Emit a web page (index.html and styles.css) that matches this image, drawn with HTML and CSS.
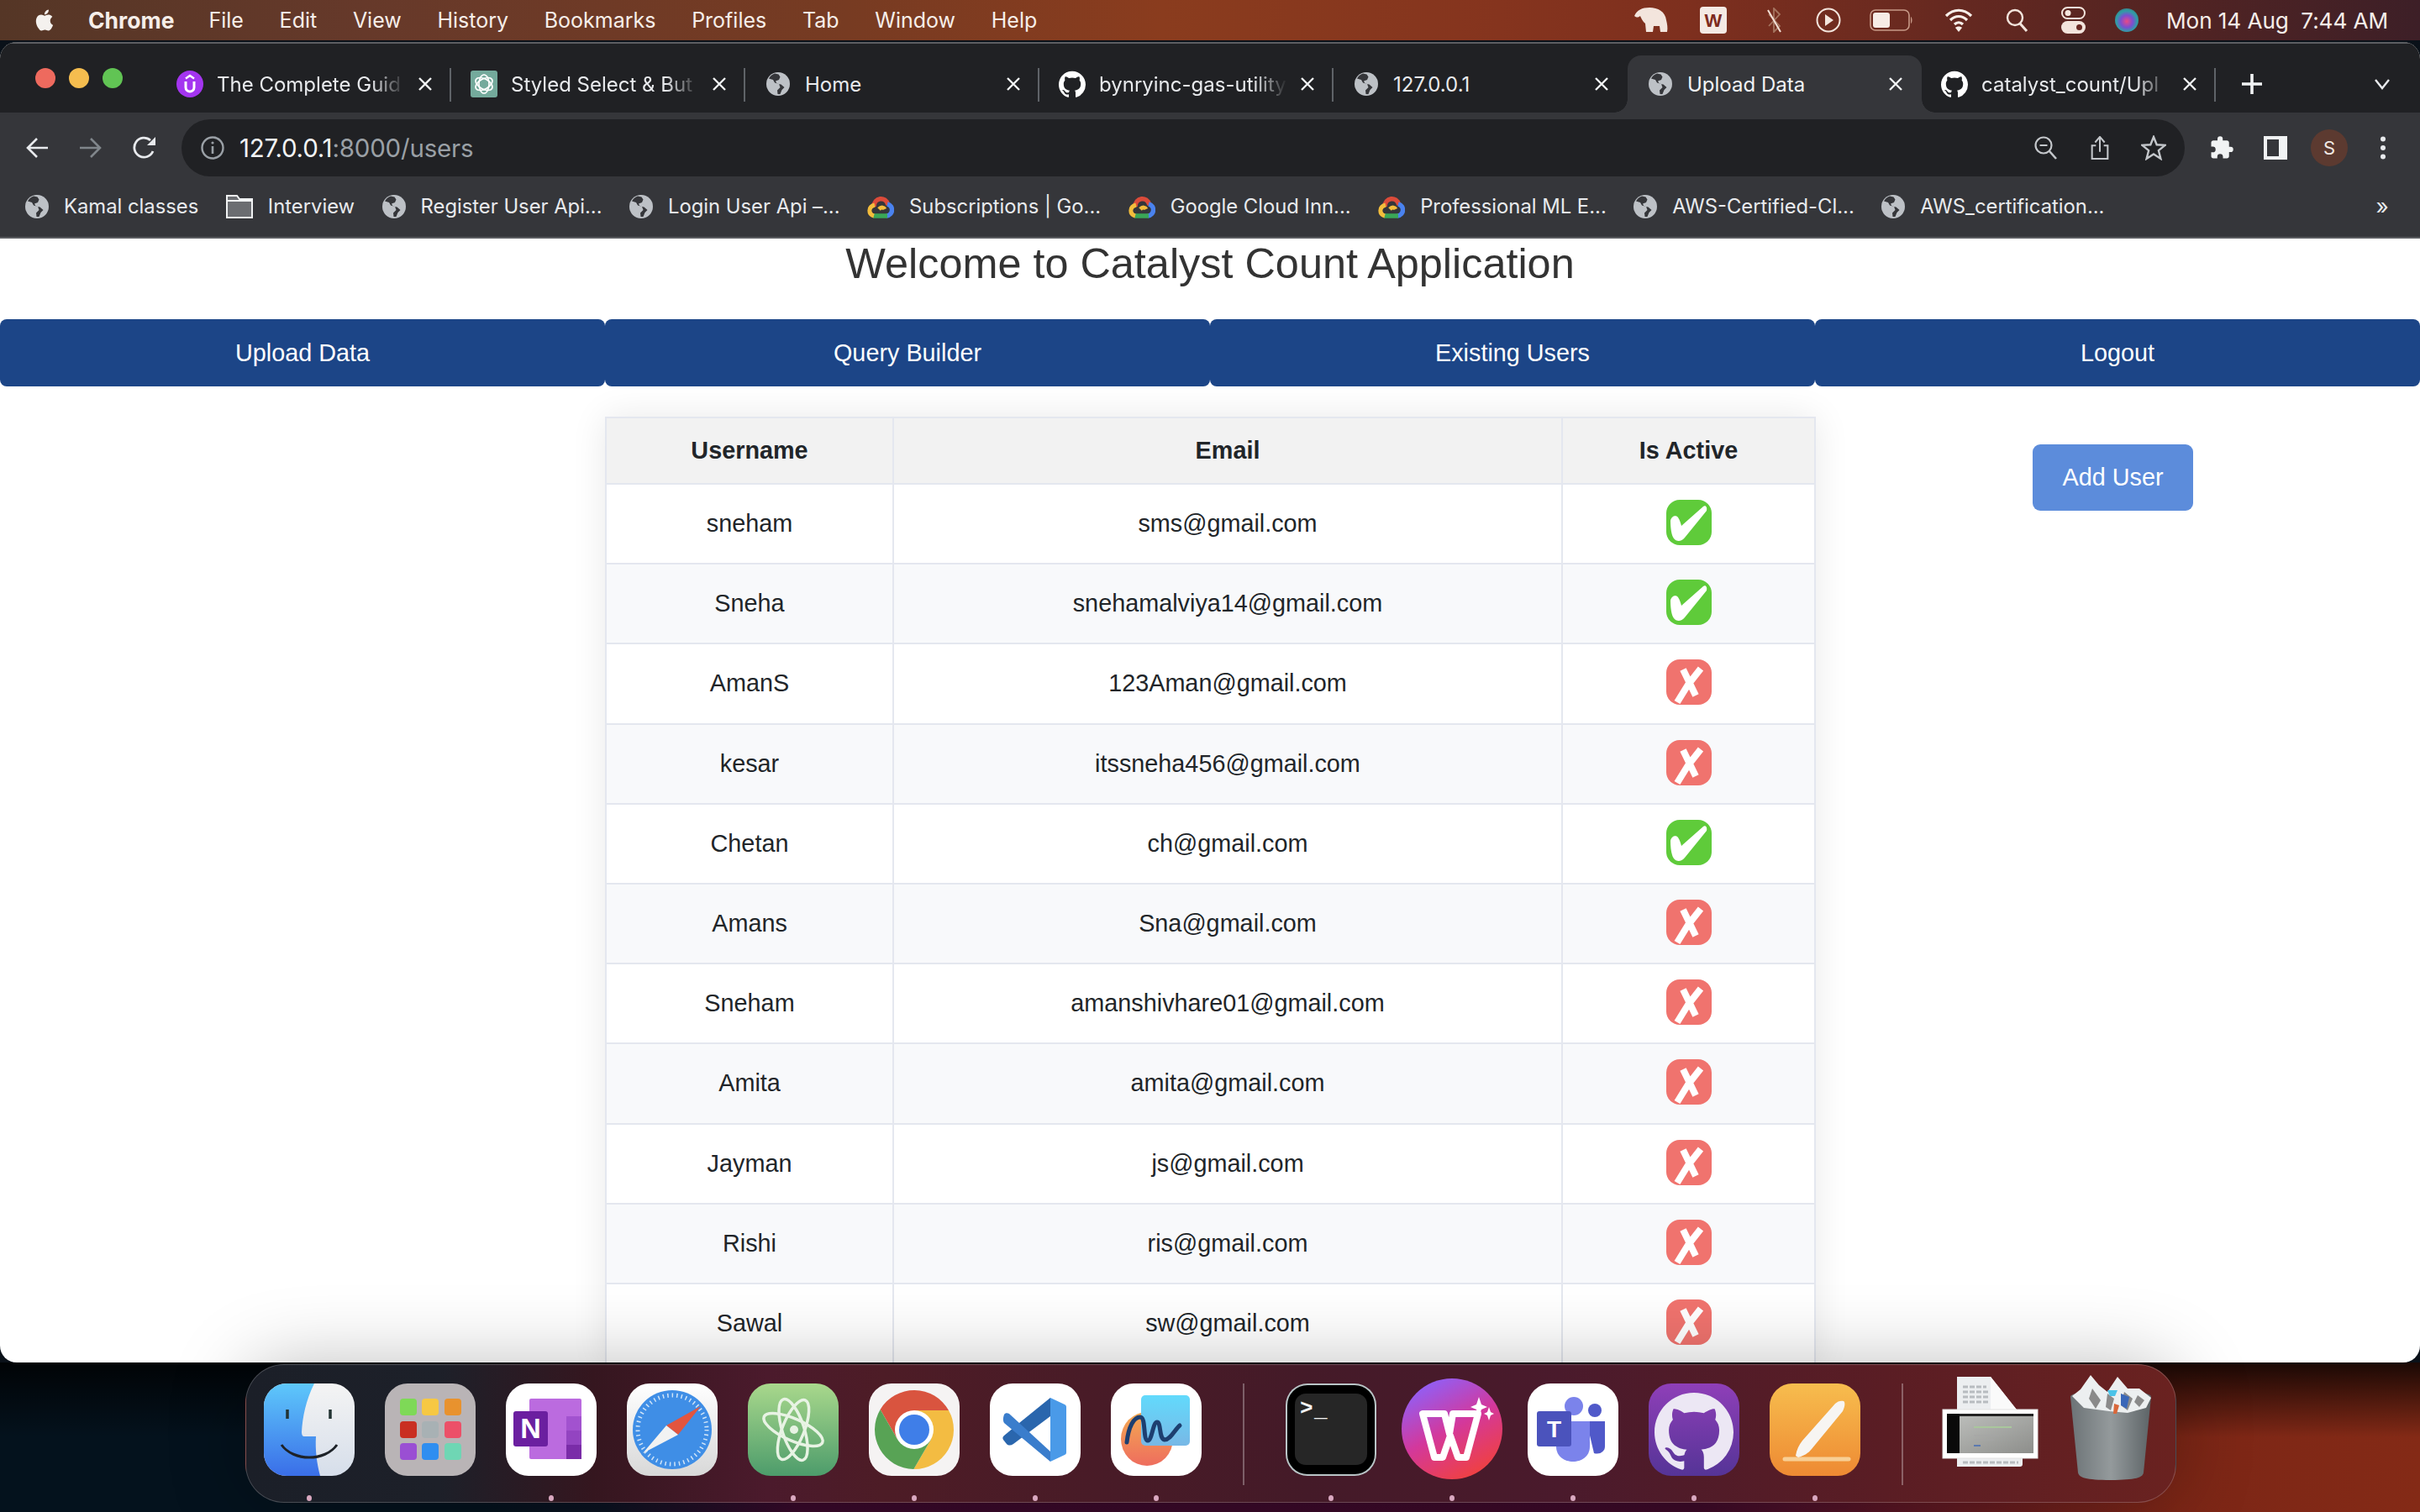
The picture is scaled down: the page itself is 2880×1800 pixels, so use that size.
FILE: index.html
```html
<!DOCTYPE html>
<html lang="en">
<head>
<meta charset="utf-8">
<title>Upload Data</title>
<link rel="stylesheet" href="styles.css">
</head>
<body>
<svg class="defs" aria-hidden="true">
  <symbol id="globe" viewBox="0 0 28 28">
    <circle cx="14" cy="14" r="14" fill="#bdc1c6"/>
    <path d="M10 1.500C7 2.500 4.500 4.500 3 7.500l5 1.500 2 3.500 5 1.500 1.500 4-3.500 3.500.5 4.500c1 .2 2 .2 3 0l2-5 3-3-4-3.500-5-1-1.500-3 4-1.500 1.500-3.500-2-3z" fill="#35363a"/>
  </symbol>
  <symbol id="github" viewBox="0 0 24 24">
    <path d="M12 .5C5.370.5 0 5.870 0 12.500c0 5.300 3.440 9.800 8.200 11.390.6.110.820-.260.820-.580v-2.030c-3.340.730-4.040-1.610-4.040-1.610-.550-1.390-1.330-1.760-1.330-1.760-1.090-.740.080-.730.080-.730 1.200.090 1.840 1.240 1.840 1.240 1.070 1.830 2.810 1.300 3.500 1 .110-.780.420-1.310.760-1.610-2.670-.3-5.470-1.330-5.470-5.930 0-1.310.470-2.380 1.240-3.220-.120-.3-.540-1.520.120-3.180 0 0 1-.320 3.300 1.230a11.500 11.500 0 0 1 6 0c2.300-1.550 3.300-1.230 3.300-1.230.660 1.660.240 2.880.120 3.180.770.840 1.240 1.910 1.240 3.220 0 4.610-2.810 5.630-5.480 5.920.430.370.810 1.100.810 2.220v3.290c0 .320.220.7.830.580A12 12 0 0 0 24 12.500C24 5.870 18.630.5 12 .5Z" fill="currentColor"/>
  </symbol>
  <symbol id="close" viewBox="0 0 18 16">
    <path d="M2 1l14 14M16 1L2 15" fill="none" stroke="#f1f3f4" stroke-width="2.400"/>
  </symbol>
  <symbol id="gcloud" viewBox="0 0 32 28">
    <path d="M8 14C8 3 22 1 25 12" fill="none" stroke="#db4b3a" stroke-width="5.500"/>
    <path d="M24 11c8 2 7 13-1 14" fill="none" stroke="#4a82ee" stroke-width="5.500"/>
    <path d="M24 25H7" fill="none" stroke="#3aa757" stroke-width="5.500"/>
    <path d="M8 25c-7-2-7-11 1-13M14 17c3-3 6-2 7 0" fill="none" stroke="#f4bd3c" stroke-width="5"/>
  </symbol>
  <symbol id="check" viewBox="0 0 54 54">
    <rect width="54" height="54" rx="16" fill="#5fcb3a"/>
    <path d="M5 25C6 19 12 18 14 21c2 3 3 6 4 10L44 8c3-2 5 1 4 5L22 45c-4 5-10 5-13 1-3-4-4-13-4-21z" fill="#fff"/>
  </symbol>
  <symbol id="cross" viewBox="0 0 54 54">
    <rect width="54" height="54" rx="16" fill="#f0736e"/>
    <path d="M20 12l15 31M41 11L26 30 13 51" fill="none" stroke="#fff" stroke-width="8"/>
  </symbol>
</svg>

<header class="menubar">
  <svg class="apple" viewBox="0 0 24 24"><path d="M18.710 19.500c-.830 1.240-1.710 2.450-3.050 2.470-1.340.030-1.770-.790-3.290-.790-1.530 0-2 .770-3.270.820-1.310.050-2.300-1.320-3.140-2.530C4.250 17 2.940 12.450 4.700 9.390c.870-1.520 2.430-2.480 4.120-2.510 1.280-.020 2.500.870 3.290.870.780 0 2.260-1.070 3.810-.910.650.030 2.470.260 3.640 1.980-.090.060-2.170 1.280-2.150 3.810.030 3.020 2.650 4.030 2.680 4.040-.030.070-.420 1.440-1.380 2.830M13 3.500c.730-.830 1.940-1.460 2.940-1.500.130 1.170-.340 2.350-1.040 3.190-.69.850-1.830 1.510-2.950 1.420-.150-1.150.410-2.350 1.050-3.110z" fill="#f4f1ee"/></svg>
  <nav class="menu-items">
    <b class="app-name">Chrome</b>
    <span>File</span><span>Edit</span><span>View</span><span>History</span><span>Bookmarks</span><span>Profiles</span><span>Tab</span><span>Window</span><span>Help</span>
  </nav>
  <div class="status-items">
    <svg class="st st-elephant" viewBox="0 0 41 30"><path d="M0 10C3 3 9 0 18 0c10 0 19 5 20 15 1 4 2 9 1 14h-8l-1-7h-7l-1 7h-8l-1-10c-3-2-5-7-6-9-3 2-4 2-7 0z" fill="#f3e5dd"/></svg>
    <svg class="st st-wps" viewBox="0 0 32 32"><rect width="32" height="32" rx="4" fill="#f4e9e4"/><text x="16" y="24" class="wps-letter">W</text></svg>
    <svg class="st st-bt" viewBox="0 0 25 30"><path d="M6 8l13 14-7 7V1l7 7L6 22" fill="none" stroke="#a5745f" stroke-width="1.800"/><path d="M5 3l15 26" stroke="#f3e0d6" stroke-width="2"/></svg>
    <svg class="st st-play" viewBox="0 0 30 30"><circle cx="15" cy="15" r="13.500" fill="none" stroke="#f3e5dd" stroke-width="2"/><path d="M11 8l10 7-10 7z" fill="#f3e5dd"/></svg>
    <svg class="st st-batt" viewBox="0 0 52 26"><rect x="1" y="1" width="46" height="24" rx="6" fill="none" stroke="#c89a88" stroke-width="1.600"/><rect x="4" y="4" width="20" height="18" rx="3" fill="#f6ece6"/><path d="M49 9c2 1 2 7 0 8z" fill="#c89a88"/></svg>
    <svg class="st st-wifi" viewBox="0 0 34 28"><path d="M2 9c9-9 21-9 30 0M7 14c6-6 14-6 20 0M12 19c3-3 7-3 10 0" fill="none" stroke="#f8efe9" stroke-width="3.200"/><path d="M17 28l-4-5c2-2 6-2 8 0z" fill="#f8efe9"/></svg>
    <svg class="st st-search" viewBox="0 0 27 28"><circle cx="11" cy="11" r="9" fill="none" stroke="#f3e5dd" stroke-width="2.400"/><path d="M17 18l8 9" stroke="#f3e5dd" stroke-width="3"/></svg>
    <svg class="st st-cc" viewBox="0 0 29 32"><rect x="1" y="1" width="27" height="13" rx="6.500" fill="none" stroke="#f3e5dd" stroke-width="2"/><circle cx="8" cy="7.500" r="3.500" fill="#f3e5dd"/><rect y="17" width="29" height="15" rx="7.500" fill="#f3e5dd"/><circle cx="21.500" cy="24.500" r="3.500" fill="#6a2a24"/></svg>
    <span class="siri"></span>
    <span class="clock">Mon 14 Aug&nbsp;&nbsp;7:44 AM</span>
  </div>
</header>

<main class="window">
  <div class="tabstrip">
    <div class="lights"><i class="light red"></i><i class="light yellow"></i><i class="light green"></i></div>
    <div class="tab">
      <svg class="fav" viewBox="0 0 32 32"><circle cx="16" cy="16" r="16" fill="#a435f0"/><path d="M11 9.500l5-3.500 5 3.500" fill="none" stroke="#fff" stroke-width="2.500"/><path d="M11 13v7c0 6.500 10 6.500 10 0v-7" fill="none" stroke="#fff" stroke-width="3"/></svg>
      <span class="title fade">The Complete Guid</span>
      <svg class="x"><use href="#close"/></svg>
    </div>
    <div class="tab">
      <svg class="fav" viewBox="0 0 32 32"><rect width="32" height="32" rx="3" fill="#74aa9c"/><g fill="none" stroke="#fff" stroke-width="1.600"><ellipse cx="16" cy="16" rx="6" ry="11"/><ellipse cx="16" cy="16" rx="6" ry="11" transform="rotate(60 16 16)"/><ellipse cx="16" cy="16" rx="6" ry="11" transform="rotate(120 16 16)"/></g></svg>
      <span class="title fade">Styled Select &amp; But</span>
      <svg class="x"><use href="#close"/></svg>
    </div>
    <div class="tab">
      <svg class="fav fav-globe"><use href="#globe"/></svg>
      <span class="title">Home</span>
      <svg class="x"><use href="#close"/></svg>
    </div>
    <div class="tab">
      <svg class="fav gh"><use href="#github"/></svg>
      <span class="title fade">bynryinc-gas-utility</span>
      <svg class="x"><use href="#close"/></svg>
    </div>
    <div class="tab no-sep">
      <svg class="fav fav-globe"><use href="#globe"/></svg>
      <span class="title">127.0.0.1</span>
      <svg class="x"><use href="#close"/></svg>
    </div>
    <div class="tab active">
      <svg class="fav fav-globe"><use href="#globe"/></svg>
      <span class="title">Upload Data</span>
      <svg class="x"><use href="#close"/></svg>
    </div>
    <div class="tab">
      <svg class="fav gh"><use href="#github"/></svg>
      <span class="title fade">catalyst_count/Upl</span>
      <svg class="x"><use href="#close"/></svg>
    </div>
    <div class="newtab"><svg viewBox="0 0 24 24"><path d="M12 0v24M0 12h24" stroke="#f1f3f4" stroke-width="3.600"/></svg></div>
    <div class="tabmenu"><svg viewBox="0 0 20 14"><path d="M2 2l8 10 8-10" fill="none" stroke="#e8eaed" stroke-width="2.400"/></svg></div>
  </div>

  <div class="toolbar">
    <button class="tb"><svg class="i26" viewBox="0 0 26 26"><path d="M26 13H3M13 2L2 13l11 11" fill="none" stroke="#e8eaed" stroke-width="2.600"/></svg></button>
    <button class="tb"><svg class="i26" viewBox="0 0 26 26"><path d="M0 13h23M13 2l11 11-11 11" fill="none" stroke="#80868b" stroke-width="2.600"/></svg></button>
    <button class="tb"><svg class="i28" viewBox="0 0 28 28"><path d="M24 18A11.500 11.500 0 1 1 21 5" fill="none" stroke="#e8eaed" stroke-width="2.800"/><path d="M27 1v10H17z" fill="#e8eaed"/></svg></button>
    <div class="omnibox">
      <svg class="info" viewBox="0 0 28 28"><circle cx="14" cy="14" r="12.500" fill="none" stroke="#9aa0a6" stroke-width="2.400"/><path d="M14 12v9" stroke="#9aa0a6" stroke-width="2.600"/><circle cx="14" cy="8" r="1.600" fill="#9aa0a6"/></svg>
      <span class="url">127.0.0.1<span class="url-dim">:8000/users</span></span>
      <span class="ob"><svg class="i28" viewBox="0 0 28 28"><circle cx="11" cy="11" r="9.500" fill="none" stroke="#c4c7cb" stroke-width="2.200"/><path d="M6.500 11h9" stroke="#c4c7cb" stroke-width="2.200"/><path d="M18 18l8 9" stroke="#c4c7cb" stroke-width="2.600"/></svg></span>
      <span class="ob"><svg class="i28" viewBox="0 0 24 30"><path d="M12 1v19M6 8l6-7 6 7" fill="none" stroke="#c4c7cb" stroke-width="2.200"/><path d="M7 12H2v17h20V12h-5" fill="none" stroke="#c4c7cb" stroke-width="2.200"/></svg></span>
      <span class="ob"><svg class="i30" viewBox="0 0 30 30"><path d="M15 2l3.700 9.300 9.800.6-7.600 6.300 2.500 9.700-8.400-5.400-8.400 5.400 2.500-9.700L1.500 11.900l9.800-.6z" fill="none" stroke="#c4c7cb" stroke-width="2.400"/></svg></span>
    </div>
    <button class="tb"><svg class="i30" viewBox="0 0 24 24"><path d="M20.500 11H19V7c0-1.100-.9-2-2-2h-4V3.500a2.500 2.500 0 0 0-5 0V5H4c-1.100 0-2 .9-2 2v3.800h1.500a2.700 2.700 0 0 1 0 5.400H2V20c0 1.100.9 2 2 2h3.800v-1.500a2.700 2.700 0 0 1 5.400 0V22H17c1.100 0 2-.9 2-2v-4h1.500a2.500 2.500 0 0 0 0-5z" fill="#f1f3f4"/></svg></button>
    <button class="tb"><svg class="i28" viewBox="0 0 28 28"><rect width="28" height="28" fill="#f1f3f4"/><rect x="4" y="4" width="14" height="20" fill="#35363a"/></svg></button>
    <button class="tb"><span class="avatar">S</span></button>
    <button class="tb"><svg class="dots" viewBox="0 0 8 28"><circle cx="4" cy="3.500" r="3" fill="#e8eaed"/><circle cx="4" cy="14" r="3" fill="#e8eaed"/><circle cx="4" cy="24.500" r="3" fill="#e8eaed"/></svg></button>
  </div>

  <div class="bookmarks">
    <span class="bm"><svg class="bm-i"><use href="#globe"/></svg>Kamal classes</span>
    <span class="bm bm-folder"><svg class="bm-f" viewBox="0 0 32 28"><path d="M1 27V1h12l3 4h15v22z" fill="#6b6d71" stroke="#f1f3f4" stroke-width="2"/><path d="M1 7h30" stroke="#f1f3f4" stroke-width="2"/></svg>Interview</span>
    <span class="bm"><svg class="bm-i"><use href="#globe"/></svg>Register User Api...</span>
    <span class="bm"><svg class="bm-i"><use href="#globe"/></svg>Login User Api –...</span>
    <span class="bm"><svg class="bm-g"><use href="#gcloud"/></svg>Subscriptions | Go...</span>
    <span class="bm"><svg class="bm-g"><use href="#gcloud"/></svg>Google Cloud Inn...</span>
    <span class="bm"><svg class="bm-g"><use href="#gcloud"/></svg>Professional ML E...</span>
    <span class="bm"><svg class="bm-i"><use href="#globe"/></svg>AWS-Certified-Cl...</span>
    <span class="bm"><svg class="bm-i"><use href="#globe"/></svg>AWS_certification...</span>
    <span class="bm-more">»</span>
  </div>

  <div class="page">
    <h1 class="heading">Welcome to Catalyst Count Application</h1>
    <div class="nav">
      <a class="nav-btn">Upload Data</a>
      <a class="nav-btn">Query Builder</a>
      <a class="nav-btn">Existing Users</a>
      <a class="nav-btn">Logout</a>
    </div>
    <section class="content">
      <table class="users">
        <thead>
          <tr><th class="c-user">Username</th><th class="c-mail">Email</th><th class="c-act">Is Active</th></tr>
        </thead>
        <tbody>
          <tr><td>sneham</td><td>sms@gmail.com</td><td><svg class="status"><use href="#check"/></svg></td></tr>
          <tr><td>Sneha</td><td>snehamalviya14@gmail.com</td><td><svg class="status"><use href="#check"/></svg></td></tr>
          <tr><td>AmanS</td><td>123Aman@gmail.com</td><td><svg class="status"><use href="#cross"/></svg></td></tr>
          <tr><td>kesar</td><td>itssneha456@gmail.com</td><td><svg class="status"><use href="#cross"/></svg></td></tr>
          <tr><td>Chetan</td><td>ch@gmail.com</td><td><svg class="status"><use href="#check"/></svg></td></tr>
          <tr><td>Amans</td><td>Sna@gmail.com</td><td><svg class="status"><use href="#cross"/></svg></td></tr>
          <tr><td>Sneham</td><td>amanshivhare01@gmail.com</td><td><svg class="status"><use href="#cross"/></svg></td></tr>
          <tr><td>Amita</td><td>amita@gmail.com</td><td><svg class="status"><use href="#cross"/></svg></td></tr>
          <tr><td>Jayman</td><td>js@gmail.com</td><td><svg class="status"><use href="#cross"/></svg></td></tr>
          <tr><td>Rishi</td><td>ris@gmail.com</td><td><svg class="status"><use href="#cross"/></svg></td></tr>
          <tr><td>Sawal</td><td>sw@gmail.com</td><td><svg class="status"><use href="#cross"/></svg></td></tr>
        </tbody>
      </table>
      <div class="side"><a class="add-user">Add User</a></div>
    </section>
  </div>
</main>

<footer class="desktop">
  <div class="dock">
    <div class="slot on"><svg class="app" viewBox="0 0 108 110">
      <defs><linearGradient id="fb" x1="0" y1="0" x2="0" y2="1"><stop offset="0" stop-color="#5ec8fb"/><stop offset="1" stop-color="#3a6ee8"/></linearGradient><linearGradient id="fw" x1="0" y1="0" x2="0" y2="1"><stop offset="0" stop-color="#f4f4f4"/><stop offset="1" stop-color="#d6deea"/></linearGradient><clipPath id="ic"><rect width="108" height="110" rx="27"/></clipPath></defs>
      <g clip-path="url(#ic)"><rect width="108" height="110" fill="url(#fw)"/><path d="M0 0h60C50 20 46 40 45 58c0 3 1 5 3 5h14c-1 16 1 32 5 47H0z" fill="url(#fb)"/></g>
      <path d="M28 31v11M79 31v11" stroke="#233" stroke-width="3.500"/><path d="M21 73c14 20 52 20 66 0" fill="none" stroke="#1d2228" stroke-width="3"/>
    </svg></div>
    <div class="slot"><svg class="app" viewBox="0 0 108 110">
      <rect width="108" height="110" rx="27" fill="#b9b4b6"/>
      <rect x="18" y="18" width="20" height="20" rx="4" fill="#7ed957"/><rect x="44" y="18" width="20" height="20" rx="4" fill="#f6c843"/><rect x="71" y="18" width="20" height="20" rx="4" fill="#e8922e"/>
      <rect x="18" y="45" width="20" height="20" rx="4" fill="#c92f22"/><rect x="44" y="45" width="20" height="20" rx="4" fill="#a8b1b4"/><rect x="71" y="45" width="20" height="20" rx="4" fill="#ec5068"/>
      <rect x="18" y="71" width="20" height="20" rx="4" fill="#9a4fd3"/><rect x="44" y="71" width="20" height="20" rx="4" fill="#2f8ef0"/><rect x="71" y="71" width="20" height="20" rx="4" fill="#6fd6b4"/>
    </svg></div>
    <div class="slot on"><svg class="app" viewBox="0 0 108 110">
      <rect width="108" height="110" rx="27" fill="#fff"/>
      <rect x="28" y="18" width="62" height="72" rx="2" fill="#bb6bdf"/>
      <rect x="72" y="39" width="18" height="17" fill="#a252cf"/><rect x="72" y="56" width="18" height="17" fill="#9344c1"/><rect x="72" y="73" width="18" height="17" fill="#7a2ca8"/>
      <rect x="9" y="33" width="41" height="42" rx="3" fill="#6b1fa0"/><text x="29.500" y="65" class="ic-n">N</text>
    </svg></div>
    <div class="slot"><svg class="app" viewBox="0 0 108 110">
      <defs><linearGradient id="sb" x1="0" y1="0" x2="0" y2="1"><stop offset="0" stop-color="#fff"/><stop offset="1" stop-color="#d8d8d8"/></linearGradient></defs>
      <rect width="108" height="110" rx="27" fill="url(#sb)"/><circle cx="54" cy="55" r="47" fill="#3f8ee6"/>
      <circle cx="54" cy="55" r="41" fill="none" stroke="#cfe4f8" stroke-width="5" stroke-dasharray="1.500 4"/>
      <path d="M88 27L47 50l14 11z" fill="#e2553f"/><path d="M19 83l28-33 14 11z" fill="#f2f2f2"/>
    </svg></div>
    <div class="slot on"><svg class="app" viewBox="0 0 108 110">
      <defs><linearGradient id="ag" x1="0" y1="0" x2="0" y2="1"><stop offset="0" stop-color="#a9d88c"/><stop offset="1" stop-color="#4d9c6b"/></linearGradient></defs>
      <rect width="108" height="110" rx="27" fill="url(#ag)"/>
      <g fill="none" stroke="#e8f3e4" stroke-width="3.500"><ellipse cx="54" cy="55" rx="13" ry="38" transform="rotate(-18 54 55)"/><ellipse cx="54" cy="55" rx="13" ry="38" transform="rotate(22 54 55)"/><ellipse cx="54" cy="55" rx="38" ry="13" transform="rotate(24 54 55)"/></g><circle cx="55" cy="55" r="5" fill="#e8f3e4"/>
    </svg></div>
    <div class="slot on"><svg class="app" viewBox="0 0 108 110">
      <rect width="108" height="110" rx="27" fill="#f5f3f3"/>
      <path d="M13.600 31A47 47 0 0 1 95 32H54L54 55 34 66.500z" fill="#d9543f"/>
      <path d="M95 32A47 47 0 0 1 53.400 102L74 66.500 54 55V32z" fill="#f3bc42"/>
      <path d="M53.400 102A47 47 0 0 1 13.600 31L34 66.500 54 55l20 11.500z" fill="#58a355"/>
      <circle cx="54" cy="55" r="23" fill="#fff"/><circle cx="54" cy="55" r="18" fill="#3f7ee8"/>
    </svg></div>
    <div class="slot on"><svg class="app" viewBox="0 0 108 110">
      <rect width="108" height="110" rx="27" fill="#fff"/>
      <path d="M72 17v22L28 72c-3 2-6 2-8 0l-4-5c-1-2-1-3 1-5l18-15z" fill="#2a66ad"/>
      <path d="M17 37c1-2 4-2 6-1l49 45v12l-55-46c-1-2-2-4 0-10z" fill="#3a7dcc"/>
      <path d="M72 17l17 8c2 1 2 2 2 4v52c0 2 0 3-2 4l-17 8z" fill="#4a9ae8"/>
    </svg></div>
    <div class="slot on"><svg class="app" viewBox="0 0 108 110">
      <defs><linearGradient id="fo" x1="0" y1="0" x2="0" y2="1"><stop offset="0" stop-color="#f4aa52"/><stop offset="1" stop-color="#ee6d5e"/></linearGradient><linearGradient id="fbl" x1="0" y1="0" x2="0" y2="1"><stop offset="0" stop-color="#62dafc"/><stop offset="1" stop-color="#78b8e6"/></linearGradient></defs>
      <rect width="108" height="110" rx="27" fill="#fff"/>
      <ellipse cx="43" cy="66" rx="31" ry="32" fill="url(#fo)"/><rect x="36" y="14" width="58" height="60" rx="5" fill="url(#fbl)"/>
      <path d="M19 70c2-18 8-30 16-30 7 0 3 28 9 28 5 0 6-22 11-22 5 0 2 20 9 21 7 0 12-12 18-17" fill="none" stroke="#1d3f70" stroke-width="5" stroke-linecap="round"/>
    </svg></div>
    <span class="dock-sep"></span>
    <div class="slot on"><svg class="app" viewBox="0 0 108 110">
      <rect width="108" height="110" rx="26" fill="#b9c4c6"/><rect x="2" y="2" width="104" height="106" rx="24" fill="#000"/><rect x="11" y="12" width="86" height="85" rx="13" fill="#262626"/>
      <text x="17" y="37" class="ic-term">&gt;</text><text x="34" y="39" class="ic-term">_</text>
    </svg></div>
    <div class="slot on"><svg class="app app-wps" viewBox="0 0 120 120">
      <defs><linearGradient id="wg" x1=".2" y1="0" x2=".75" y2="1"><stop offset="0" stop-color="#8a63ff"/><stop offset=".5" stop-color="#d3389c"/><stop offset="1" stop-color="#f2413a"/></linearGradient></defs>
      <circle cx="60" cy="60" r="60" fill="url(#wg)"/>
      <path d="M25 42h26l6 24 4-24h30L77 94H67L58 68 49 94H39z" fill="none" stroke="#fff" stroke-width="8" stroke-linejoin="round"/>
      <path d="M92 22l3 9 7 3-7 3-3 9-3-9-7-3 7-3zM104 34l2 6 4 2-4 2-2 6-2-6-4-2 4-2z" fill="#fff"/>
    </svg></div>
    <div class="slot on"><svg class="app" viewBox="0 0 108 110">
      <rect width="108" height="110" rx="27" fill="#fff"/>
      <circle cx="55" cy="27" r="11" fill="#7b83eb"/><circle cx="80" cy="32" r="8" fill="#5059c9"/>
      <path d="M70 45h22v30c0 6-6 10-13 8z" fill="#5059c9"/><path d="M34 45h40v30c0 24-40 24-40 0z" fill="#7b83eb"/>
      <rect x="11" y="33" width="41" height="42" rx="3" fill="#4b53bc"/><text x="31.500" y="64" class="ic-t">T</text>
    </svg></div>
    <div class="slot on"><svg class="app" viewBox="0 0 108 110">
      <defs><linearGradient id="gh" x1="0" y1="0" x2="0" y2="1"><stop offset="0" stop-color="#8f3fb8"/><stop offset="1" stop-color="#553497"/></linearGradient></defs>
      <rect width="108" height="110" rx="27" fill="url(#gh)"/>
      <svg class="gh-big" x="7" y="9" width="94" height="94"><use href="#github"/></svg>
    </svg></div>
    <div class="slot on"><svg class="app" viewBox="0 0 108 110">
      <defs><linearGradient id="pg" x1="0" y1="0" x2="0" y2="1"><stop offset="0" stop-color="#f7bd4e"/><stop offset="1" stop-color="#ee8a33"/></linearGradient></defs>
      <rect width="108" height="110" rx="27" fill="url(#pg)"/>
      <path d="M18 90h76" stroke="#f8cf95" stroke-width="5" stroke-linecap="round"/>
      <path d="M88 21c2 1 2 6-1 12L50 78c-4 5-9 8-16 10l-3-2c1-7 4-13 8-18L78 24c3-3 7-4 10-3z" fill="#f7f5f2"/>
    </svg></div>
    <span class="dock-sep"></span>
    <div class="slot"><svg class="app" viewBox="0 0 108 110">
      <path d="M15-8h40l38 48v56a3 3 0 0 1-3 3H15z" fill="#eceef0"/><path d="M55-8l38 48H62c-4 0-7-3-7-7z" fill="#fafafa"/>
      <path d="M22 4h28M22 10h30M22 16h30M22 22h30M60 44h28M22 94h66" stroke="#b8bcc0" stroke-width="3" stroke-dasharray="6 2"/>
      <rect x="-2" y="31" width="113" height="58" fill="#fff" stroke="#e2e2e2"/>
      <defs><linearGradient id="sh" x1="0" y1="0" x2="1" y2="1"><stop offset="0" stop-color="#c0c2bf"/><stop offset="1" stop-color="#8d8e8b"/></linearGradient></defs>
      <rect x="3" y="36" width="103" height="47" fill="url(#sh)"/><rect x="3" y="36" width="15" height="47" fill="#0a0a0a"/><rect x="18" y="36" width="88" height="3" fill="#222"/>
      <path d="M35 52h45" stroke="#a9c79c" stroke-width="2"/><path d="M35 74h8" stroke="#5b79b0" stroke-width="2"/><path d="M35 62h30M35 67h24" stroke="#a5a5a5" stroke-width="1"/>
    </svg></div>
    <div class="slot"><svg class="app" viewBox="0 0 108 110">
      <defs><linearGradient id="tg" x1="0" y1="0" x2="1" y2="0"><stop offset="0" stop-color="#6c7376"/><stop offset=".5" stop-color="#949a9c"/><stop offset="1" stop-color="#5c6366"/></linearGradient></defs>
      <path d="M6 16c0-4 10-6 48-6s48 2 48 6l-9 90c-1 6-9 9-39 9s-38-3-39-9z" fill="url(#tg)"/>
      <path d="M8 15l10-8 12-17 10 12 10 8 12-18 12 14 14 0 14 11-6 12-22 6-22-2-30-4z" fill="#eceff0"/>
      <path d="M32 6l10 14-6 10-8-12zM50 12l8 6-4 14-6-4zM70 10l10 8-6 14-8-6zM86 14l8 6-6 8-6-6z" fill="#8a8a8a"/><path d="M50 8h12l-3 7h-6z" fill="#4bc3e8"/><path d="M66 12l10 4-3 14-7-4z" fill="#3a67b8"/><path d="M58 24l6 2-3 10h-4z" fill="#d9673a"/>
    </svg></div>
  </div>
</footer>
</body>
</html>
```
FILE: styles.css
```css
* { box-sizing: border-box; }
html, body { margin: 0; padding: 0; }
body {
  width: 2880px;
  height: 1800px;
  overflow: hidden;
  background: #0a1119;
  font-family: "Liberation Sans", Arial, sans-serif;
  color: #212529;
}
.defs { width: 0; height: 0; display: block; overflow: hidden; }

/* menu bar */
.menubar {
  height: 48px;
  margin-bottom: 2px;
  display: flex;
  align-items: center;
  padding-left: 38px;
  color: #f6eee9;
  font-family: Inter, "Noto Sans", sans-serif;
  font-size: 25px;
  background: linear-gradient(90deg, #553626 0, #66392a 15%, #773b22 35%, #8a3c1e 48%, #85341e 62%, #7d2f1e 70%, #5c2621 85%, #3d1f27 100%);
}
.apple { width: 30px; height: 34px; flex: none; }
.menu-items { display: flex; align-items: center; gap: 42.700px; margin-left: 37px; }
.app-name { font-weight: 700; font-size: 26.500px; margin-right: -1.700px; }
.status-items { margin-left: auto; display: flex; align-items: center; padding-right: 38px; }
.st { display: block; flex: none; }
.st-elephant { width: 41px; height: 30px; margin-right: 37px; }
.st-wps { width: 32px; height: 32px; margin-right: 44px; }
.wps-letter { font: 700 22px "Liberation Sans", sans-serif; fill: #7d2a20; text-anchor: middle; }
.st-bt { width: 25px; height: 30px; margin-right: 37px; }
.st-play { width: 30px; height: 30px; margin-right: 34px; }
.st-batt { width: 52px; height: 26px; margin-right: 37px; }
.st-wifi { width: 34px; height: 28px; margin-right: 39px; }
.st-search { width: 27px; height: 28px; margin-right: 39px; }
.st-cc { width: 29px; height: 32px; margin-right: 35px; }
.siri {
  width: 28px; height: 28px; border-radius: 50%; margin-right: 33px; flex: none;
  background: radial-gradient(circle at 50% 55%, #e84a86 0, #7a4ed0 35%, #2f9ea5 60%, #4a5560 100%);
}
.clock { white-space: nowrap; font-size: 26.200px; letter-spacing: -.1px; }

/* browser window */
.window {
  height: 1572px;
  border-radius: 20px;
  overflow: hidden;
  background: #fff;
  display: flex;
  flex-direction: column;
  position: relative;
}
.tabstrip {
  height: 84px;
  flex: none;
  display: flex;
  align-items: flex-end;
  background: #202124;
  border-top: 2px solid #5c5e62;
}
.lights { width: 187px; flex: none; display: flex; gap: 16px; padding-left: 42px; margin-bottom: 29px; }
.light { width: 24px; height: 24px; border-radius: 50%; display: block; }
.red { background: #ee6a5e; }
.yellow { background: #f5bd4f; }
.green { background: #61c454; }
.tab {
  width: 350px;
  height: 68px;
  flex: none;
  position: relative;
  display: flex;
  align-items: center;
  padding-left: 23px;
  color: #e8eaed;
  font-family: Inter, "Noto Sans", sans-serif;
  font-size: 24px;
}
.tab::after {
  content: "";
  position: absolute;
  right: 0;
  top: 15px;
  height: 40px;
  width: 2px;
  background: #5f6368;
}
.tab.no-sep::after { display: none; }
.tab.active { background: #35363a; border-radius: 16px 16px 0 0; color: #f1f3f4; }
.tab.active::before, .tab.active::after {
  content: "";
  position: absolute;
  top: auto;
  bottom: 0;
  width: 16px;
  height: 16px;
}
.tab.active::before { left: -16px; background: radial-gradient(circle at 0 0, transparent 15.500px, #35363a 16px); }
.tab.active::after { right: -16px; background: radial-gradient(circle at 100% 0, transparent 15.500px, #35363a 16px); }
.fav { width: 32px; height: 32px; flex: none; }
.fav-globe { width: 28px; height: 28px; margin: 0 2px; }
.gh { color: #fff; }
.title { width: 224px; margin-left: 16px; white-space: nowrap; overflow: hidden; flex: none; }
.fade { -webkit-mask-image: linear-gradient(90deg, #000 82%, transparent 100%); mask-image: linear-gradient(90deg, #000 82%, transparent 100%); }
.x { width: 18px; height: 16px; margin-left: 15px; flex: none; }
.newtab { width: 86px; height: 68px; flex: none; display: flex; align-items: center; justify-content: center; }
.newtab svg { width: 24px; height: 24px; }
.tabmenu { margin-left: auto; width: 64px; height: 68px; margin-right: 13px; display: flex; align-items: center; justify-content: center; }
.tabmenu svg { width: 20px; height: 14px; }

.toolbar {
  height: 84px;
  flex: none;
  display: flex;
  align-items: center;
  background: #35363a;
  padding: 0 12px;
}
.tb {
  width: 64px;
  height: 64px;
  flex: none;
  background: none;
  border: 0;
  padding: 0;
  display: flex;
  align-items: center;
  justify-content: center;
}
.i26 { width: 26px; height: 26px; }
.i28 { width: 28px; height: 28px; }
.i30 { width: 30px; height: 30px; }
.dots { width: 8px; height: 28px; }
.avatar {
  width: 44px; height: 44px; border-radius: 50%;
  background: #5c3a30;
  color: #f1e9e4;
  font: 22px Inter, sans-serif;
  display: flex; align-items: center; justify-content: center;
}
.omnibox {
  flex: 1;
  height: 68px;
  margin: 0 12px;
  border-radius: 34px;
  background: #202124;
  display: flex;
  align-items: center;
  padding: 0 5px 0 23px;
}
.info { width: 28px; height: 28px; flex: none; }
.url { flex: 1; margin-left: 18px; font: 29.500px Inter, "Noto Sans", sans-serif; color: #f1f3f4; letter-spacing: -.2px; }
.url-dim { color: #9aa0a6; }
.ob { width: 64px; display: flex; justify-content: center; flex: none; }

.bookmarks {
  height: 66px;
  flex: none;
  display: flex;
  align-items: center;
  gap: 32.500px;
  background: #35363a;
  border-bottom: 2px solid #5a5c60;
  padding: 0 13px 9px 30px;
  color: #e8eaed;
  font-family: Inter, "Noto Sans", sans-serif;
  font-size: 23.800px;
  white-space: nowrap;
}
.bm { display: flex; align-items: center; gap: 18px; flex: none; }
.bm-i { width: 28px; height: 28px; flex: none; }
.bm-f { width: 32px; height: 28px; flex: none; }
.bm-g { width: 32px; height: 28px; flex: none; }
.bm-more { margin-left: auto; width: 64px; text-align: center; font-size: 26px; }

/* page */
.page { flex: 1; min-height: 0; }
.heading {
  margin: 0 0 36px;
  height: 60px;
  font-size: 50.400px;
  line-height: 60px;
  font-weight: 400;
  text-align: center;
  color: #333;
}
.nav { display: flex; }
.nav-btn {
  flex: 1;
  height: 80px;
  border-radius: 8px;
  background: #1c4587;
  color: #fff;
  font-size: 28.800px;
  display: flex;
  align-items: center;
  justify-content: center;
}
.content { display: flex; margin-top: 36px; padding-left: 720px; align-items: flex-start; }
.users {
  width: 1439px;
  flex: none;
  table-layout: fixed;
  border-collapse: collapse;
  box-shadow: 0 0 40px rgba(0, 0, 0, .09);
  font-size: 28.800px;
  text-align: center;
  color: #212529;
  background: #fff;
}
.users th, .users td { border: 2px solid #e4e7ef; padding: 0; }
.users th { height: 79px; background: #f2f2f2; font-weight: 700; }
.users td { height: 95.200px; }
.users tbody tr:nth-child(even) { background: #f8f9fb; }
.c-user { width: 342px; }
.c-mail { width: 796px; }
.c-act { width: 301px; }
.status { width: 54px; height: 54px; display: block; margin: 0 auto 3px; }
.side { padding: 33px 0 0 258px; }
.add-user {
  width: 191px;
  height: 79px;
  border-radius: 9px;
  background: #5c8cdb;
  color: #fff;
  font-size: 28.800px;
  display: flex;
  align-items: center;
  justify-content: center;
}

/* desktop + dock */
.desktop {
  height: 178px;
  padding-top: 2px;
  background:
    linear-gradient(180deg, rgba(0, 0, 0, .8) 0, rgba(0, 0, 0, 0) 50%),
    linear-gradient(90deg, #04121d 0, #04121d 20%, #0b1220 25%, #38092a 33%, #3c0a28 70%, #4a0f28 74%, #7c2616 90%, #842a16 100%);
}
.dock {
  width: 2298px;
  height: 165px;
  margin-left: 292px;
  position: relative;
  display: flex;
  padding: 22px 0 0 21px;
  gap: 36px;
  border: 1px solid rgba(255, 255, 255, .2);
  border-radius: 46px;
  box-shadow: 0 0 90px rgba(0, 0, 0, .26);
  background: linear-gradient(90deg, #1b1f28 0, #1d2029 10%, #35161f 18%, #4b1a2c 27%, #4d1c26 33%, #441a28 55%, #4a1a2c 68%, #5a1d24 85%, #6a2220 100%);
}
.slot { width: 108px; height: 141px; flex: none; position: relative; }
.slot.on::after {
  content: "";
  position: absolute;
  left: 51px;
  top: 133px;
  width: 6px;
  height: 7px;
  border-radius: 50%;
  background: #d9a8c0;
}
.app { width: 108px; height: 110px; display: block; overflow: visible; }
.app-wps { width: 120px; height: 120px; margin: -6px 0 0 -6px; }
.gh-big { color: #ece7f4; }
.ic-n { font: 700 34px "Liberation Sans", sans-serif; fill: #fff; text-anchor: middle; }
.ic-t { font: 700 28px "Liberation Sans", sans-serif; fill: #fff; text-anchor: middle; }
.ic-term { font: 700 26px "Liberation Mono", monospace; fill: #f4f4f4; }
.dock-sep { width: 2px; height: 121px; margin: 0 13.500px 0 12.500px; flex: none; background: rgba(255, 255, 255, .3); }
```
